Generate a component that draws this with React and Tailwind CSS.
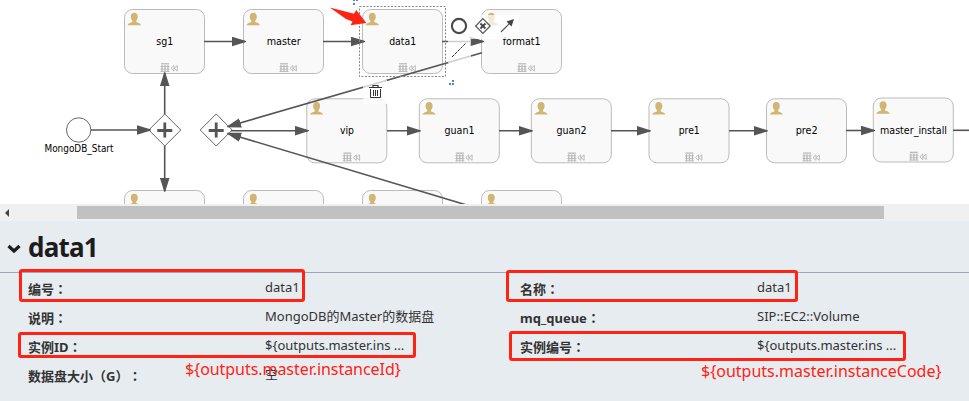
import React from "react";

const NODES = [
  { x: 124.5, y: 9.5, label: "sg1", w: 17 },
  { x: 243.5, y: 9.5, label: "master", w: 34 },
  { x: 362.5, y: 9.5, label: "data1", w: 27 },
  { x: 481.5, y: 9.5, label: "format1", w: 38 },
  { x: 306.8, y: 98.8, label: "vip", w: 14 },
  { x: 419.3, y: 98.8, label: "guan1", w: 30 },
  { x: 531.3, y: 98.8, label: "guan2", w: 30 },
  { x: 649, y: 98.8, label: "pre1", w: 21 },
  { x: 766.5, y: 98.8, label: "pre2", w: 22 },
  { x: 873.3, y: 98, label: "master_install", w: 67 },
  { x: 124.5, y: 190.5 },
  { x: 243.5, y: 190.5 },
  { x: 362.5, y: 190.5 },
  { x: 481.5, y: 190.5 },
];

const FLOWS = [
  [204, 41.5, 245, 41.5],
  [323, 41.5, 364, 41.5],
  [442, 41.5, 483, 41.5],
  [91, 130, 150, 130],
  [164.7, 114, 164.7, 73],
  [164.7, 146, 164.7, 191],
  [231, 130.7, 308, 130.7],
  [387, 130.8, 420, 130.8],
  [499, 130.8, 532, 130.8],
  [611, 130.8, 650, 130.8],
  [729, 130.8, 767, 130.8],
  [846, 130.5, 874, 130.5],
  [482, 52.8, 228, 126.5],
  [480, 209, 228, 133.5],
];

function Task({ x, y, label, w }) {
  return (
    <g transform={`translate(${x} ${y})`}>
      <rect width="80" height="64" rx="8" fill="#f9f9f9" stroke="#bbb" />
      <path
        d="M9.8 3.3c2.2 0 3.5 1.6 3.5 3.9 0 1.7-.7 3.2-1.6 4.1v1.3c1.6.9 4.4 1 4.700 3.200H3.200c.3-2.200 3.100-2.300 4.700-3.200v-1.300c-.9-.9-1.600-2.400-1.600-4.100 0-2.300 1.300-3.900 3.500-3.900z"
        fill="#d1b572"
      />
      {label && (
        <text
          x="40.2"
          y="35.7"
          textAnchor="middle"
          textLength={w}
          lengthAdjust="spacingAndGlyphs"
          className="font-['DejaVu_Sans',sans-serif] text-[10px]"
          fill="#000"
        >
          {label}
        </text>
      )}
      <g stroke="#b5b5b5" fill="none">
        <path d="M36.5 54.3h8" strokeWidth="1.2" />
        <path d="M36 57h9M36 59.7h9M36 62h9" strokeWidth=".8" />
        <path d="M37.5 55.5v7M40.5 55.5v7M43.5 55.5v7" strokeWidth="1.2" />
        <path d="M49.5 56v5.6l-3-2.8zM52.8 56v5.6l-3-2.8z" strokeWidth=".9" />
      </g>
    </g>
  );
}

function Gateway({ x, y }) {
  return (
    <g transform={`translate(${x} ${y})`}>
      <path d="M0-16 16 0 0 16-16 0z" fill="#fff" stroke="#666" />
      <path d="M0-7.5v15M-7.5 .5h15" stroke="#555" strokeWidth="2.8" />
    </g>
  );
}

function Diagram() {
  return (
    <svg width="969" height="204" viewBox="0 0 969 204" className="block">
      <defs>
        <marker id="head" markerUnits="userSpaceOnUse" markerWidth="14" markerHeight="10" refX="13" refY="5" orient="auto">
          <path d="M0 .2 14 4.6v.8L0 9.8z" fill="#555" />
        </marker>
      </defs>
      {NODES.map((n, i) => (
        <Task key={i} {...n} />
      ))}
      <circle cx="78.7" cy="130" r="12.2" fill="#fff" stroke="#666" />
      <text
        x="44.5"
        y="152"
        textLength="69"
        lengthAdjust="spacingAndGlyphs"
        className="font-['DejaVu_Sans',sans-serif] text-[10px]"
      >
        MongoDB_Start
      </text>
      <Gateway x={164.8} y={130} />
      <Gateway x={216.2} y={130} />
      {FLOWS.map(([a, b, c, d], i) => (
        <path key={i} d={`M${a} ${b}L${c} ${d}`} stroke="#555" strokeWidth="1.6" markerEnd="url(#head)" />
      ))}
      <path d="M953 130.3h16" stroke="#555" strokeWidth="1.6" />

      {/* selection frame */}
      <rect x="359.5" y="6.5" width="86" height="70" fill="none" stroke="#888" strokeDasharray="2 1.5" />
      <path
        d="M353 3h2v2h-2zM353 0h2v1h-2zM356 0h2v1h-2zM449 83h2v2h-2zM452 83h2v2h-2zM452 80h2v2h-2z"
        fill="#5a83bd"
      />

      {/* context pad */}
      <path d="M448 15h71v24h-48v24h-23zM363 80h24v24h-24z" fill="#fff" fillOpacity=".72" />
      <circle cx="459" cy="26" r="7.1" fill="none" stroke="#4a4a4a" strokeWidth="2.1" />
      <g fill="none" stroke="#555">
        <path d="M482.9 18.7l7.3 7.3-7.3 7.3-7.3-7.3z" strokeWidth="1.2" />
        <path d="m480.4 23.500 5 5m0-5-5 5" stroke="#444" strokeWidth="1.800" />
        <path d="m501 32 10-10" strokeWidth="1.2" />
        <path d="M452 57l14-14" stroke="#333" strokeDasharray="3 1" />
      </g>
      <path d="m514 19-2.5 7.5-5-5z" fill="#444" />
      <g fill="none" stroke="#333">
        <path d="M369 87.5h13M373 87v-1.5h5V87" strokeWidth="1.2" />
        <path d="M370.5 89v8.5h10V89M373.5 90v6M375.5 90v6M377.5 90v6" />
      </g>

      {/* annotation arrow */}
      <path d="M329.8 7.5 354 13.8 356.300 10 366.300 23 350.500 25.300 352.500 21.500 346 19z" fill="#ff2314" />
    </svg>
  );
}

const ROWS = [
  [["编号", "data1"], ["名称", "data1"]],
  [["说明", "MongoDB的Master的数据盘"], ["mq_queue", "SIP::EC2::Volume"]],
  [["实例ID", "${outputs.master.ins ..."], ["实例编号", "${outputs.master.ins ..."]],
  [["数据盘大小（G）", "空"], null],
];

export default function App() {
  return (
    <div className="relative flex h-[401px] w-[969px] flex-col overflow-hidden bg-white font-['Noto_Sans','Noto_Sans_CJK_SC',sans-serif] text-[#333]">
      <div className="h-[204px] shrink-0 overflow-hidden">
        <Diagram />
      </div>
      <div className="flex h-[17px] shrink-0 items-center bg-[#f0f0f0]">
        <div className="flex w-[77px] pl-[5px]">
          <div className="h-0 w-0 border-y-4 border-r-4 border-y-transparent border-r-[#444]" />
        </div>
        <div className="h-[13px] w-[807px] bg-[#c1c1c1]" />
      </div>
      <div className="flex-1 bg-[#e7ecf0]">
        <div className="flex h-[52px] items-center border-b border-[#9fa8bb] pl-[7px]">
          <svg width="14" height="10" viewBox="0 0 14 10" className="mt-1 mr-[7px]">
            <path d="m1.5 2 5.5 5 5.5-5" fill="none" stroke="#1c1c1c" strokeWidth="3.2" />
          </svg>
          <h1 className="text-[26px] leading-none font-bold tracking-[-0.8px] text-[#1c1c1c]">data1</h1>
        </div>
        <div className="flex flex-col">
          {ROWS.map((row, i) => (
            <div key={i} className="flex h-[29px] pl-[28px] text-[13px] leading-[29px] whitespace-nowrap">
              {row.map(
                (cell, j) =>
                  cell && (
                    <div key={j} className="flex w-[492px] shrink-0">
                      <div className="w-[237px] pt-px font-bold [text-spacing-trim:space-all]">
                        {cell[0]}
                        <span lang="ja" className="font-['Noto_Sans_CJK_JP',sans-serif]">
                          ：
                        </span>
                      </div>
                      <div>{cell[1]}</div>
                    </div>
                  ),
              )}
            </div>
          ))}
        </div>
      </div>

      {/* annotations over the property panel */}
      <div className="absolute top-[269px] left-[19px] h-[33px] w-[286px] rounded-[3px] border-3 border-[#ff2314]" />
      <div className="absolute top-[332px] left-[18px] h-[26px] w-[398px] rounded-[3px] border-3 border-[#ff2314]" />
      <div className="absolute top-[270px] left-[506px] h-[32px] w-[292px] rounded-[3px] border-3 border-[#ff2314]" />
      <div className="absolute top-[331px] left-[509px] h-[30px] w-[397px] rounded-[3px] border-3 border-[#ff2314]" />
      <div className="absolute top-[357px] left-[185px] text-base leading-6 tracking-[-0.05px] whitespace-nowrap text-[#ff2314]">
        {"${outputs.master.instanceId}"}
      </div>
      <div className="absolute top-[359px] left-[701px] text-base leading-6 whitespace-nowrap text-[#ff2314]">
        {"${outputs.master.instanceCode}"}
      </div>
    </div>
  );
}
